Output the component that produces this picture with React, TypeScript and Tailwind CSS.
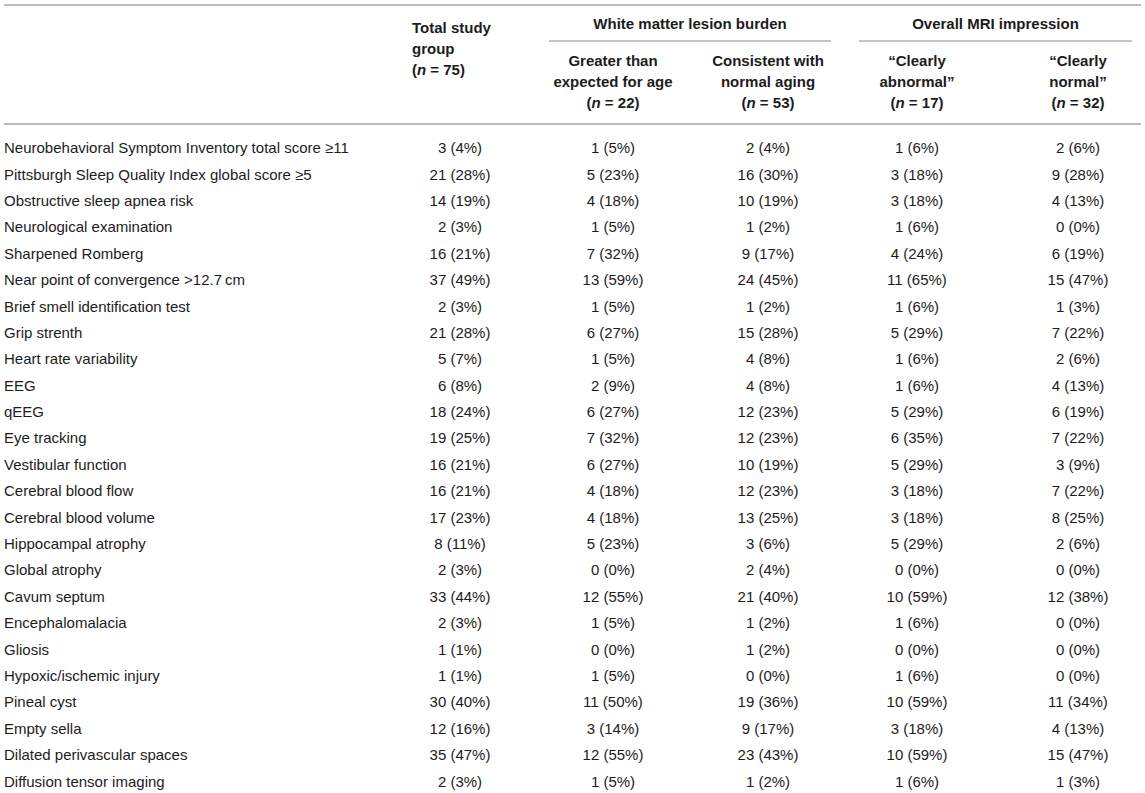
import * as React from 'react';

type Row = [string, string, string, string, string, string];

const rows: Row[] = [
  ['Neurobehavioral Symptom Inventory total score \u226511', '3 (4%)', '1 (5%)', '2 (4%)', '1 (6%)', '2 (6%)'],
  ['Pittsburgh Sleep Quality Index global score \u22655', '21 (28%)', '5 (23%)', '16 (30%)', '3 (18%)', '9 (28%)'],
  ['Obstructive sleep apnea risk', '14 (19%)', '4 (18%)', '10 (19%)', '3 (18%)', '4 (13%)'],
  ['Neurological examination', '2 (3%)', '1 (5%)', '1 (2%)', '1 (6%)', '0 (0%)'],
  ['Sharpened Romberg', '16 (21%)', '7 (32%)', '9 (17%)', '4 (24%)', '6 (19%)'],
  ['Near point of convergence >12.7\u2009cm', '37 (49%)', '13 (59%)', '24 (45%)', '11 (65%)', '15 (47%)'],
  ['Brief smell identification test', '2 (3%)', '1 (5%)', '1 (2%)', '1 (6%)', '1 (3%)'],
  ['Grip strenth', '21 (28%)', '6 (27%)', '15 (28%)', '5 (29%)', '7 (22%)'],
  ['Heart rate variability', '5 (7%)', '1 (5%)', '4 (8%)', '1 (6%)', '2 (6%)'],
  ['EEG', '6 (8%)', '2 (9%)', '4 (8%)', '1 (6%)', '4 (13%)'],
  ['qEEG', '18 (24%)', '6 (27%)', '12 (23%)', '5 (29%)', '6 (19%)'],
  ['Eye tracking', '19 (25%)', '7 (32%)', '12 (23%)', '6 (35%)', '7 (22%)'],
  ['Vestibular function', '16 (21%)', '6 (27%)', '10 (19%)', '5 (29%)', '3 (9%)'],
  ['Cerebral blood flow', '16 (21%)', '4 (18%)', '12 (23%)', '3 (18%)', '7 (22%)'],
  ['Cerebral blood volume', '17 (23%)', '4 (18%)', '13 (25%)', '3 (18%)', '8 (25%)'],
  ['Hippocampal atrophy', '8 (11%)', '5 (23%)', '3 (6%)', '5 (29%)', '2 (6%)'],
  ['Global atrophy', '2 (3%)', '0 (0%)', '2 (4%)', '0 (0%)', '0 (0%)'],
  ['Cavum septum', '33 (44%)', '12 (55%)', '21 (40%)', '10 (59%)', '12 (38%)'],
  ['Encephalomalacia', '2 (3%)', '1 (5%)', '1 (2%)', '1 (6%)', '0 (0%)'],
  ['Gliosis', '1 (1%)', '0 (0%)', '1 (2%)', '0 (0%)', '0 (0%)'],
  ['Hypoxic/ischemic injury', '1 (1%)', '1 (5%)', '0 (0%)', '1 (6%)', '0 (0%)'],
  ['Pineal cyst', '30 (40%)', '11 (50%)', '19 (36%)', '10 (59%)', '11 (34%)'],
  ['Empty sella', '12 (16%)', '3 (14%)', '9 (17%)', '3 (18%)', '4 (13%)'],
  ['Dilated perivascular spaces', '35 (47%)', '12 (55%)', '23 (43%)', '10 (59%)', '15 (47%)'],
  ['Diffusion tensor imaging', '2 (3%)', '1 (5%)', '1 (2%)', '1 (6%)', '1 (3%)'],
];

// per-column padding so the centred values line up with the header text
const pad = ['pl-1', 'pl-[2px] pr-[20px]', 'pl-[21px] pr-[14px]', 'pl-[14px] pr-[14px]', 'pl-[14px] pr-[23px]', 'pl-[26px] pr-[13px]'];

const N = ({ v }: { v: string }) => (
  <>
    (<i>n</i> = {v})
  </>
);

export default function App() {
  return (
    <div className="w-[1145px] h-[793px] overflow-hidden bg-white text-[#1c1c1c] text-[15px] font-['Liberation_Sans',Arial,sans-serif]">
      <div className="pt-1">
        <div className="ml-1 mr-1 h-[2px] bg-[#bcbcbc]" />
        <div className="grid grid-cols-[410px_118px_163px_154px_153px_147px] font-bold">
          <div className="row-span-2" />
          <div className={`row-span-2 pt-[11px] leading-[21px] ${pad[1]}`}>
            Total study
            <br />
            group
            <br />
            <N v="75" />
          </div>
          <div className="col-span-2 pl-[21px] pr-[14px]">
            <div className="text-center pt-[8px] pb-[6px] leading-[20px]">White matter lesion burden</div>
            <div className="h-[2px] bg-[#c4c4c4]" />
          </div>
          <div className="col-span-2 pl-[14px] pr-[13px]">
            <div className="text-center pt-[8px] pb-[6px] leading-[20px]">Overall MRI impression</div>
            <div className="h-[2px] bg-[#c4c4c4]" />
          </div>
          <div className={`text-center pt-[8px] pb-[10px] leading-[21px] ${pad[2]}`}>
            Greater than
            <br />
            expected for age
            <br />
            <N v="22" />
          </div>
          <div className={`text-center pt-[8px] pb-[10px] leading-[21px] ${pad[3]}`}>
            Consistent with
            <br />
            normal aging
            <br />
            <N v="53" />
          </div>
          <div className={`text-center pt-[8px] pb-[10px] leading-[21px] ${pad[4]}`}>
            &ldquo;Clearly
            <br />
            abnormal&rdquo;
            <br />
            <N v="17" />
          </div>
          <div className={`text-center pt-[8px] pb-[10px] leading-[21px] ${pad[5]}`}>
            &ldquo;Clearly
            <br />
            normal&rdquo;
            <br />
            <N v="32" />
          </div>
        </div>
        <div className="ml-1 mr-1 h-[2px] bg-[#bcbcbc]" />
        <div className="pt-[10px]">
          {rows.map((r) => (
            <div key={r[0]} className="grid grid-cols-[410px_118px_163px_154px_153px_147px] h-[26.4px] items-center leading-[18px]">
              {r.map((c, i) => (
                <div key={i} className={`${pad[i]} ${i === 0 ? 'text-left' : 'text-center'} whitespace-nowrap`}>
                  {c}
                </div>
              ))}
            </div>
          ))}
        </div>
      </div>
    </div>
  );
}
